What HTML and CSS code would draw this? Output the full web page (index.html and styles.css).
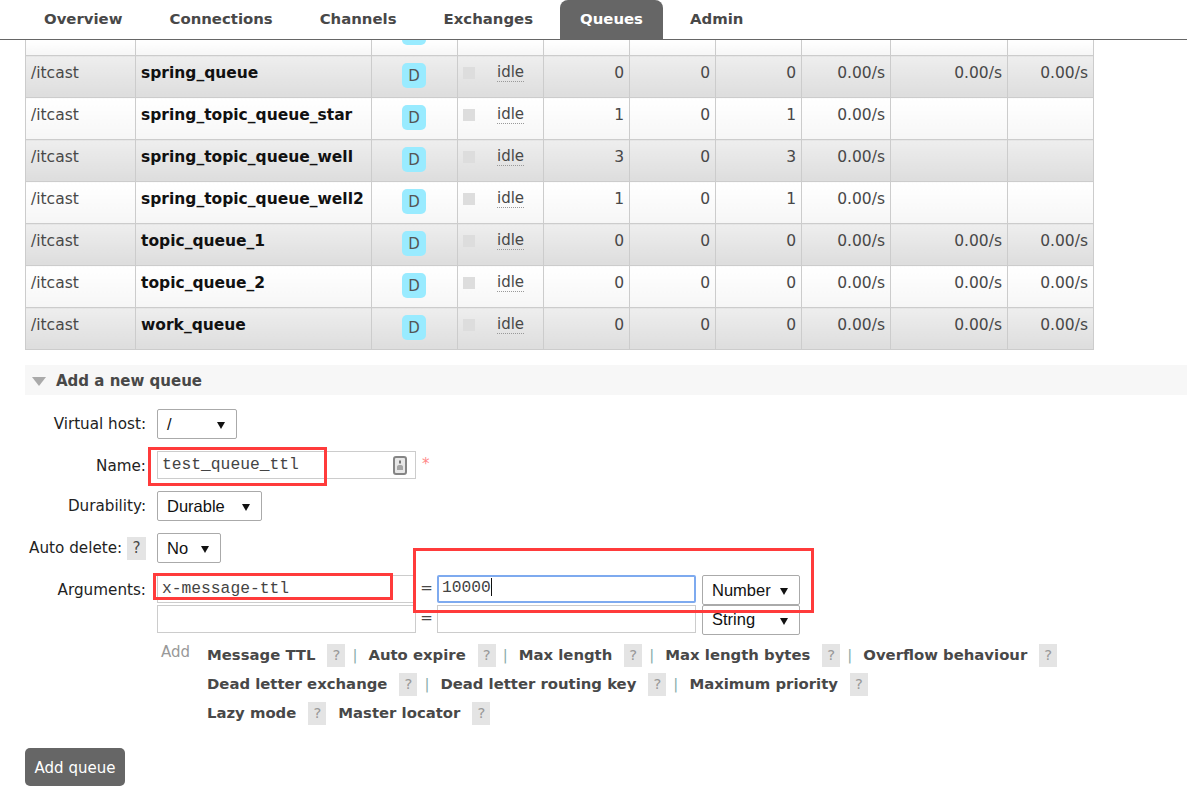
FILE: index.html
```html
<!DOCTYPE html>
<html lang="en">
<head>
    <meta charset="UTF-8">
    <meta name="viewport" content="width=device-width, initial-scale=1.0">
    <title>Queues</title>
    <link rel="stylesheet" href="styles.css">
</head>
<body>
    <ul class="tabs">
        <li><a href="#">Overview</a></li>
        <li><a href="#">Connections</a></li>
        <li><a href="#">Channels</a></li>
        <li><a href="#">Exchanges</a></li>
        <li class="selected"><a href="#">Queues</a></li>
        <li><a href="#">Admin</a></li>
    </ul>

    <table class="queues">
        <colgroup>
            <col class="c-vhost"><col class="c-name"><col class="c-feat"><col class="c-state"><col class="c-num">
            <col class="c-num"><col class="c-num"><col class="c-rate"><col class="c-rate2"><col class="c-num">
        </colgroup>
        <tr class="cut">
            <td></td><td></td><td class="center"><div class="clip"><span class="badge"></span></div></td>
            <td></td><td></td><td></td><td></td><td></td><td></td><td></td>
        </tr>
        <tr class="alt">
            <td>/itcast</td><td class="qname">spring_queue</td><td class="center"><span class="badge">D</span></td>
            <td><div class="state"><i class="dot"></i><abbr>idle</abbr></div></td>
            <td class="r">0</td><td class="r">0</td><td class="r">0</td><td class="r">0.00/s</td><td class="r">0.00/s</td><td class="r">0.00/s</td>
        </tr>
        <tr>
            <td>/itcast</td><td class="qname">spring_topic_queue_star</td><td class="center"><span class="badge">D</span></td>
            <td><div class="state"><i class="dot"></i><abbr>idle</abbr></div></td>
            <td class="r">1</td><td class="r">0</td><td class="r">1</td><td class="r">0.00/s</td><td></td><td></td>
        </tr>
        <tr class="alt">
            <td>/itcast</td><td class="qname">spring_topic_queue_well</td><td class="center"><span class="badge">D</span></td>
            <td><div class="state"><i class="dot"></i><abbr>idle</abbr></div></td>
            <td class="r">3</td><td class="r">0</td><td class="r">3</td><td class="r">0.00/s</td><td></td><td></td>
        </tr>
        <tr>
            <td>/itcast</td><td class="qname">spring_topic_queue_well2</td><td class="center"><span class="badge">D</span></td>
            <td><div class="state"><i class="dot"></i><abbr>idle</abbr></div></td>
            <td class="r">1</td><td class="r">0</td><td class="r">1</td><td class="r">0.00/s</td><td></td><td></td>
        </tr>
        <tr class="alt">
            <td>/itcast</td><td class="qname">topic_queue_1</td><td class="center"><span class="badge">D</span></td>
            <td><div class="state"><i class="dot"></i><abbr>idle</abbr></div></td>
            <td class="r">0</td><td class="r">0</td><td class="r">0</td><td class="r">0.00/s</td><td class="r">0.00/s</td><td class="r">0.00/s</td>
        </tr>
        <tr>
            <td>/itcast</td><td class="qname">topic_queue_2</td><td class="center"><span class="badge">D</span></td>
            <td><div class="state"><i class="dot"></i><abbr>idle</abbr></div></td>
            <td class="r">0</td><td class="r">0</td><td class="r">0</td><td class="r">0.00/s</td><td class="r">0.00/s</td><td class="r">0.00/s</td>
        </tr>
        <tr class="alt">
            <td>/itcast</td><td class="qname">work_queue</td><td class="center"><span class="badge">D</span></td>
            <td><div class="state"><i class="dot"></i><abbr>idle</abbr></div></td>
            <td class="r">0</td><td class="r">0</td><td class="r">0</td><td class="r">0.00/s</td><td class="r">0.00/s</td><td class="r">0.00/s</td>
        </tr>
    </table>

    <div class="section">
        <h2><i class="arrow"></i>Add a new queue</h2>
        <form class="add-form">
            <div class="row">
                <label>Virtual host:</label>
                <span class="sel sel-vhost">/<i class="caret"></i></span>
            </div>
            <div class="row row-name">
                <label>Name:</label>
                <span class="txt txt-name">test_queue_ttl
                    <svg class="key" width="14" height="19" viewBox="0 0 14 19">
                        <rect x="1" y="1" width="12" height="17" rx="2" fill="#e8e8e8" stroke="#858585" stroke-width="2"/>
                        <rect x="6" y="4.5" width="2" height="3" fill="#777"/>
                        <path d="M4 14v-3.5c0-.8 1-1.5 3-1.5s3 .7 3 1.5V14z" fill="#a5a5a5"/>
                    </svg>
                </span>
                <span class="req">*</span>
            </div>
            <div class="row">
                <label>Durability:</label>
                <span class="sel sel-dur">Durable<i class="caret"></i></span>
            </div>
            <div class="row">
                <label>Auto delete: <span class="help">?</span></label>
                <span class="sel sel-auto">No<i class="caret"></i></span>
            </div>
            <div class="row row-args">
                <label>Arguments:</label>
                <div class="args">
                    <div class="arg">
                        <span class="txt">x-message-ttl</span>
                        <span class="eq">=</span>
                        <span class="txt focus">10000<i class="cursor"></i></span>
                        <span class="sel sel-type">Number<i class="caret"></i></span>
                    </div>
                    <div class="arg">
                        <span class="txt"></span>
                        <span class="eq">=</span>
                        <span class="txt"></span>
                        <span class="sel sel-type sel-up">String<i class="caret"></i></span>
                    </div>
                    <div class="hints">
                        <span class="add">Add</span>
                        <div class="hint-lines">
                            <p><b>Message TTL</b><span class="help">?</span><u>|</u><b>Auto expire</b><span class="help">?</span><u>|</u><b>Max length</b><span class="help">?</span><u>|</u><b>Max length bytes</b><span class="help">?</span><u>|</u><b>Overflow behaviour</b><span class="help">?</span></p>
                            <p><b>Dead letter exchange</b><span class="help">?</span><u>|</u><b>Dead letter routing key</b><span class="help">?</span><u>|</u><b>Maximum priority</b><span class="help">?</span></p>
                            <p><b>Lazy mode</b><span class="help">?</span><b class="next">Master locator</b><span class="help">?</span></p>
                        </div>
                    </div>
                </div>
            </div>
            <button type="button" class="submit">Add queue</button>
        </form>
    </div>

    <div class="mark mark-name"></div>
    <div class="mark mark-key"></div>
    <div class="mark mark-value"></div>
</body>
</html>
```
FILE: styles.css
```css
body {
    font-family: "DejaVu Sans", Verdana, sans-serif;
    font-size: 15px;
    color: #484848;
    margin: 0;
    padding: 0;
    background: #fff;
    overflow: hidden;
}
.tabs {
    list-style: none;
    margin: 0;
    padding: 0 0 0 24px;
    height: 39px;
    display: flex;
    gap: 7px;
    border-bottom: 1px solid #666;
}
.tabs a {
    display: block;
    height: 39px;
    line-height: 39px;
    padding: 0 20px;
    font-size: 14.9px;
    font-weight: bold;
    color: #484848;
    text-decoration: none;
}
.tabs .selected a {
    background: #666;
    color: #fff;
    border-radius: 8px 8px 0 0;
}

.queues {
    border-collapse: collapse;
    table-layout: fixed;
    width: 1069px;
    margin-left: 25px;
}
.c-vhost { width: 110px; }
.c-name { width: 236px; }
.c-feat { width: 86px; }
.c-state { width: 86px; }
.c-num { width: 86px; }
.c-rate { width: 89px; }
.c-rate2 { width: 117px; }
.queues td {
    border: 1px solid #ccc;
    height: 42px;
    padding: 0 5px 8px;
    box-sizing: border-box;
    background: linear-gradient(#fff, #f6f6f6);
    font-size: 15.5px;
}
.queues tr:first-child td {
    border-top: none;
    height: 15px;
    padding: 0;
}
.queues tr.alt td {
    background: linear-gradient(#eee, #ddd);
}
.queues td.r {
    text-align: right;
}
.queues td.center {
    text-align: center;
    padding: 0;
    vertical-align: top;
}
.queues td.qname {
    font-weight: bold;
    color: #111;
}
.clip {
    height: 15px;
    overflow: hidden;
}
.clip .badge {
    margin-top: -20px;
}
.badge {
    display: block;
    width: 24px;
    height: 25px;
    line-height: 27px;
    margin: 7px 0 0 30px;
    background: #99ebff;
    border-radius: 5px;
    color: #555;
    font-size: 15px;
    text-align: center;
}
.state {
    display: flex;
    align-items: center;
}
.dot {
    display: block;
    width: 12px;
    height: 12px;
    background: #ddd;
    margin-right: 22px;
}
abbr {
    border-bottom: 1px dotted #999;
    font-size: 15px;
    line-height: 17px;
}

.section {
    margin: 15px 0 0 25px;
}
.section h2 {
    margin: 0;
    height: 30px;
    box-sizing: border-box;
    padding-top: 2px;
    background: #f7f7f7;
    font-size: 15px;
    color: #484848;
    font-weight: bold;
    display: flex;
    align-items: center;
}
.arrow {
    width: 0;
    height: 0;
    margin: 0 10px 0 7px;
    border-left: 7px solid transparent;
    border-right: 7px solid transparent;
    border-top: 9px solid #aaa;
}
.add-form {
    padding-top: 14px;
}
.row {
    display: flex;
    align-items: flex-start;
    margin-bottom: 12px;
}
.row label {
    width: 121px;
    height: 30px;
    margin-right: 11px;
    text-align: right;
    line-height: 31px;
    font-size: 15.2px;
    color: #222;
    white-space: nowrap;
}
.row-name {
    margin-bottom: 10px;
}
.sel {
    position: relative;
    display: block;
    box-sizing: border-box;
    height: 30px;
    line-height: 28px;
    padding-left: 9px;
    border: 1px solid #aaa;
    border-radius: 2px;
    font-family: "Liberation Sans", Arial, sans-serif;
    font-size: 16.5px;
    color: #111;
    background: #fff;
}
.sel-vhost { width: 80px; }
.sel-dur { width: 105px; }
.sel-auto { width: 64px; }
.sel-type { width: 98px; }
.sel-up { line-height: 27px; }
.caret {
    position: absolute;
    right: 11px;
    top: 12px;
    width: 0;
    height: 0;
    border-left: 4px solid transparent;
    border-right: 4px solid transparent;
    border-top: 7px solid #111;
}
.txt {
    position: relative;
    display: block;
    box-sizing: border-box;
    width: 259px;
    height: 28px;
    line-height: 26px;
    padding-left: 4px;
    border: 1px solid #ccc;
    font-family: "Liberation Mono", "Courier New", monospace;
    font-size: 16.3px;
    color: #444;
    background: #fff;
}
.key {
    position: absolute;
    right: 8px;
    top: 4px;
}
.req {
    margin-left: 6px;
    color: #f88;
    line-height: 26px;
}
.focus {
    border: 2px solid #7eaaef;
    border-radius: 2px;
    padding-left: 3px;
    line-height: 22px;
}
.cursor {
    display: inline-block;
    width: 1px;
    height: 18px;
    background: #111;
    vertical-align: -4px;
}
.args {
    display: flex;
    flex-direction: column;
}
.arg {
    display: flex;
    height: 30px;
}
.eq {
    width: 21px;
    text-align: center;
    line-height: 26px;
    color: #484848;
}
.arg .sel {
    margin-left: 6px;
}
.row-args {
    margin-bottom: 0;
}
.hints {
    display: flex;
    margin-top: 9px;
}
.add {
    width: 50px;
    height: 21px;
    padding-left: 4px;
    box-sizing: border-box;
    color: #999;
    line-height: 16px;
}
.hint-lines p {
    margin: 0 0 6px;
    height: 23px;
    line-height: 23px;
    font-size: 14.85px;
    white-space: nowrap;
    display: flex;
}
.hint-lines b {
    color: #484848;
}
.hint-lines u {
    text-decoration: none;
    color: #8aa;
    margin: 0 11px 0 7px;
}
.hint-lines .next {
    margin-left: 12px;
}
.help {
    display: inline-block;
    width: 18px;
    height: 23px;
    line-height: 23px;
    margin-left: 12px;
    background: #e4e4e4;
    color: #999;
    text-align: center;
}
label .help {
    width: 19px;
    margin-left: 0;
    color: #484848;
}
.submit {
    display: block;
    width: 100px;
    height: 38px;
    margin-top: 17px;
    padding-top: 3px;
    background: #666;
    color: #fff;
    border: none;
    border-radius: 5px;
    font-family: inherit;
    font-size: 15px;
}
.mark {
    position: absolute;
    box-sizing: border-box;
    border: 3px solid #ff3b3b;
}
.mark-name { left: 148px; top: 447px; width: 179px; height: 39px; }
.mark-key { left: 153px; top: 573px; width: 240px; height: 27px; }
.mark-value { left: 413px; top: 548px; width: 401px; height: 65px; }
```
